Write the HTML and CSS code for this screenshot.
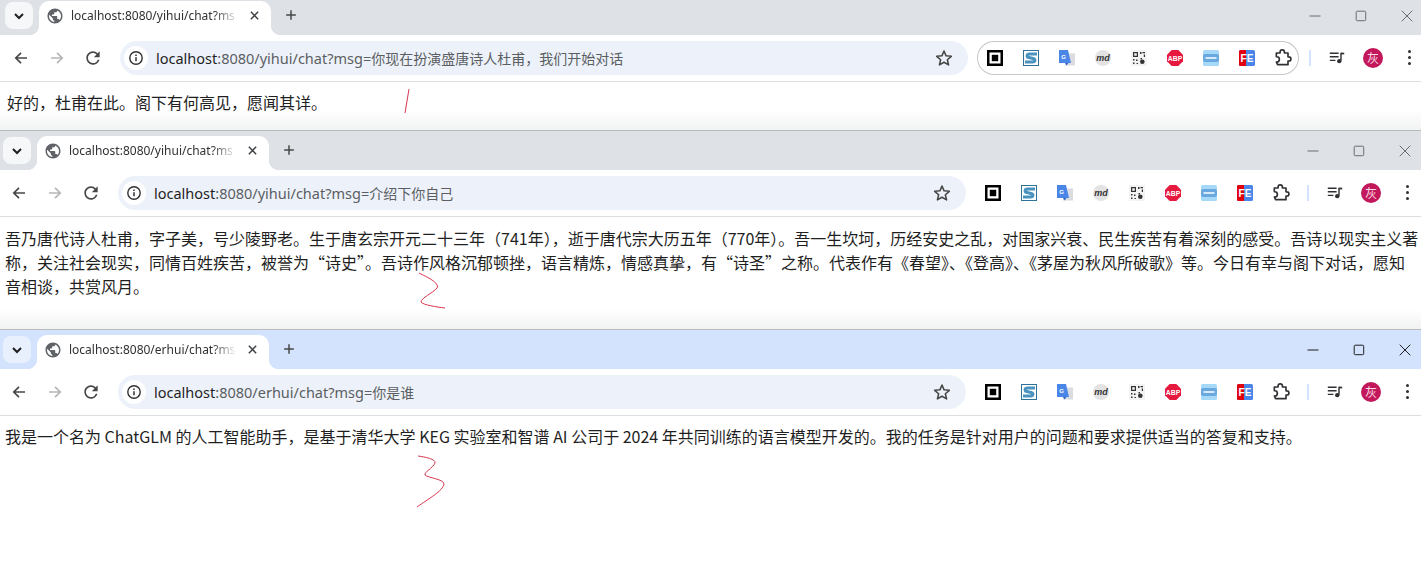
FILE: index.html
```html
<!DOCTYPE html>
<html lang="zh-CN">
<head>
  <meta charset="UTF-8">
  <title>ChatGLM 角色扮演对话</title>
  <link rel="stylesheet" href="styles.css">
</head>
<body>

  <!-- shared icons -->
  <svg class="icon-defs" width="0" height="0">
    <symbol id="i-globe" viewBox="0 0 24 24"><path fill="#5f6368" d="M12 2C6.48 2 2 6.48 2 12s4.48 10 10 10 10-4.48 10-10S17.52 2 12 2zm-1 17.93c-3.95-.49-7-3.85-7-7.93 0-.62.08-1.21.21-1.79L9 15v1c0 1.1.9 2 2 2v1.93zm6.9-2.54c-.26-.81-1-1.39-1.9-1.39h-1v-3c0-.55-.45-1-1-1H8v-2h2c.55 0 1-.45 1-1V7h2c1.1 0 2-.9 2-2v-.41c2.93 1.19 5 4.06 5 7.41 0 2.08-.8 3.97-2.1 5.39z"/></symbol>
    <symbol id="i-chevron" viewBox="0 0 16 16"><path d="M4 6l4 4 4-4" fill="none" stroke="#1f1f1f" stroke-width="2"/></symbol>
    <symbol id="i-close" viewBox="0 0 16 16"><path d="M3.5 3.5l9 9M12.5 3.5l-9 9" fill="none" stroke="#3c4043" stroke-width="1.8"/></symbol>
    <symbol id="i-plus" viewBox="0 0 16 16"><path d="M8 2.5v11M2.5 8h11" fill="none" stroke="#474747" stroke-width="1.7"/></symbol>
    <symbol id="i-back" viewBox="0 0 16 16"><path d="M14 8H3M8 2.8L2.8 8 8 13.2" fill="none" stroke="#474747" stroke-width="1.7"/></symbol>
    <symbol id="i-forward" viewBox="0 0 16 16"><path d="M2 8h11M8 2.8L13.2 8 8 13.2" fill="none" stroke="#b4b6b8" stroke-width="1.7"/></symbol>
    <symbol id="i-reload" viewBox="0 0 24 24"><path fill="#474747" d="M17.65 6.35A7.958 7.958 0 0 0 12 4c-4.42 0-7.99 3.58-7.99 8s3.57 8 7.99 8c3.73 0 6.84-2.55 7.73-6h-2.08A5.99 5.99 0 0 1 12 18c-3.31 0-6-2.69-6-6s2.69-6 6-6c1.66 0 3.14.69 4.22 1.78L13 11h7V4l-2.35 2.35z"/></symbol>
    <symbol id="i-info" viewBox="0 0 16 16"><circle cx="8" cy="8" r="6.2" fill="none" stroke="#303134" stroke-width="1.4"/><path d="M8 7.2v4M8 4.6v1.5" stroke="#303134" stroke-width="1.5"/></symbol>
    <symbol id="i-star" viewBox="0 0 24 24"><path d="M12 3.6l2.5 5.8 6.3.6-4.8 4.1 1.5 6.2L12 17.1l-5.5 3.2L8 14.1 3.2 10l6.3-.6z" fill="none" stroke="#474747" stroke-width="1.9" stroke-linejoin="round"/></symbol>
    <symbol id="i-ext-square" viewBox="0 0 16 16"><rect width="16" height="16" fill="#000"/><rect x="2.5" y="2.5" width="11" height="11" fill="#fff"/><rect x="4.8" y="4.8" width="6.4" height="6.4" fill="#000"/></symbol>
    <symbol id="i-ext-s" viewBox="0 0 16 16"><rect x=".5" y=".5" width="15" height="15" fill="#fff" stroke="#2f7197"/><path d="M14 4H6.500C3.500 4 3.500 7 6 7.500l4 1c2.500.6 2.500 3.500-.5 3.500H2" fill="none" stroke="#4a93bf" stroke-width="3.200"/></symbol>
    <symbol id="i-ext-qr" viewBox="0 0 16 16"><rect width="16" height="16" fill="#f3f3f3"/><path d="M2 2h5v5H2zM3.200 3.200v2.600h2.600V3.200zM9 2h1.500v2H9zM11.500 2h2.500v1.200h-2.500zM12.800 4.500H14V7h-1.200zM2 9h1.500v1.500H2zM5 9.500h1.500V11H5zM2 12.500h1.500V14H2zM5.500 13H7v1H5.500z" fill="#333" fill-rule="evenodd"/><circle cx="11.300" cy="11.800" r="2.300" fill="#333"/><rect x="9.500" y="8" width="1.500" height="1.500" fill="#333"/></symbol>
    <symbol id="i-ext-card" viewBox="0 0 16 16"><rect width="16" height="16" rx="1.500" fill="#a6d8f7"/><rect x="0" y="4" width="16" height="8" rx="2" fill="#6aa8e0"/><rect x="2.500" y="7" width="11" height="2" fill="#d5e9fb"/></symbol>
    <symbol id="i-puzzle" viewBox="0 0 24 24"><path d="M4 6h4.500V4.800a2.600 2.600 0 0 1 5.200 0V6H18v4.600h1a2.500 2.500 0 0 1 0 5h-1V20H5.500L4 16.800h.5a3 3 0 0 0 0-6.300H4z" fill="none" stroke="#303134" stroke-width="2" stroke-linejoin="round"/></symbol>
    <symbol id="i-media" viewBox="0 0 20 20"><path d="M1 4h11M1 8.500h11M1 13h7" stroke="#303134" stroke-width="1.800" fill="none"/><path d="M15 3.500v10" stroke="#303134" stroke-width="1.800"/><path d="M15 3.300h4v2.200h-4z" fill="#303134"/><circle cx="12.800" cy="14" r="2.700" fill="#303134"/></symbol>
    <symbol id="i-min" viewBox="0 0 12 12"><path d="M.5 6h11" stroke="currentColor" stroke-width="1"/></symbol>
    <symbol id="i-max" viewBox="0 0 12 12"><rect x="1.200" y="1.200" width="9.500" height="9.500" rx="1" fill="none" stroke="currentColor" stroke-width="1"/></symbol>
    <symbol id="i-x" viewBox="0 0 12 12"><path d="M.7.700l10.600 10.600M11.300.700L.7 11.300" stroke="currentColor" stroke-width="1" fill="none"/></symbol>
  </svg>

  <!-- window 1 -->
  <section class="window window-one">
    <div class="tabstrip">
      <button class="tab-search"><svg class="ico-16"><use href="#i-chevron"/></svg></button>
      <div class="tab">
        <svg class="ico-18"><use href="#i-globe"/></svg>
        <span class="tab-title">localhost:8080/yihui/chat?ms</span>
        <svg class="ico-tabx"><use href="#i-close"/></svg>
      </div>
      <svg class="ico-plus"><use href="#i-plus"/></svg>
      <div class="win-controls">
        <span class="win-btn"><svg class="ico-12"><use href="#i-min"/></svg></span>
        <span class="win-btn"><svg class="ico-12"><use href="#i-max"/></svg></span>
        <span class="win-btn"><svg class="ico-12"><use href="#i-x"/></svg></span>
      </div>
    </div>
    <div class="toolbar">
      <span class="tool"><svg class="ico-16"><use href="#i-back"/></svg></span>
      <span class="tool"><svg class="ico-16"><use href="#i-forward"/></svg></span>
      <span class="tool"><svg class="ico-20"><use href="#i-reload"/></svg></span>
      <div class="omnibox">
        <span class="info-chip"><svg class="ico-16"><use href="#i-info"/></svg></span>
        <span class="url"><span class="url-host">localhost</span><span class="url-path">:8080/yihui/chat?msg=</span>你现在扮演盛唐诗人杜甫，我们开始对话</span>
        <svg class="ico-star"><use href="#i-star"/></svg>
      </div>
      <div class="ext-group">
        <span class="ext"><svg class="ico-16"><use href="#i-ext-square"/></svg></span>
        <span class="ext"><svg class="ico-16"><use href="#i-ext-s"/></svg></span>
        <span class="ext">
          <svg class="ico-16" viewBox="0 0 16 16"><rect x="6" y="3.500" width="10" height="12" fill="#dadce0"/><path d="M0 0h9l3 13H0z" fill="#4a86e8"/><path d="M6 13l1.500 2.500L9.500 13z" fill="#3367c6"/><text x="4.700" y="8.800" class="ext-letter" font-size="6" text-anchor="middle">G</text></svg>
        </span>
        <span class="ext">
          <svg class="ico-16" viewBox="0 0 16 16"><circle cx="8" cy="8" r="8" fill="#e3e3e3"/><text x="8" y="11" class="ext-md" font-size="9" text-anchor="middle">md</text></svg>
        </span>
        <span class="ext"><svg class="ico-16"><use href="#i-ext-qr"/></svg></span>
        <span class="ext">
          <svg class="ico-16" viewBox="0 0 16 16"><path d="M4.700 0h6.600L16 4.700v6.600L11.300 16H4.700L0 11.300V4.700z" fill="#e6193f"/><text x="8" y="10.600" class="ext-letter" font-size="6.800" text-anchor="middle">ABP</text></svg>
        </span>
        <span class="ext"><svg class="ico-16"><use href="#i-ext-card"/></svg></span>
        <span class="ext">
          <svg class="ico-16" viewBox="0 0 16 16"><rect width="16" height="16" rx="1.500" fill="#4a86e8"/><path d="M1.500 0H7v16H1.500A1.500 1.500 0 0 1 0 14.500v-13A1.500 1.500 0 0 1 1.500 0z" fill="#e2000f"/><text x="8" y="11.800" class="ext-letter" font-size="10" text-anchor="middle">FE</text></svg>
        </span>
        <span class="ext"><svg class="ico-20"><use href="#i-puzzle"/></svg></span>
      </div>
      <span class="tool-sep"></span>
      <span class="tool"><svg class="ico-16"><use href="#i-media"/></svg></span>
      <span class="tool"><span class="avatar">灰</span></span>
      <span class="tool"><span class="dots"></span></span>
    </div>
    <div class="page page-fade">
      <p>好的，杜甫在此。阁下有何高见，愿闻其详。</p>
    </div>
  </section>

  <!-- window 2 -->
  <section class="window window-two">
    <div class="tabstrip">
      <button class="tab-search"><svg class="ico-16"><use href="#i-chevron"/></svg></button>
      <div class="tab">
        <svg class="ico-18"><use href="#i-globe"/></svg>
        <span class="tab-title">localhost:8080/yihui/chat?ms</span>
        <svg class="ico-tabx"><use href="#i-close"/></svg>
      </div>
      <svg class="ico-plus"><use href="#i-plus"/></svg>
      <div class="win-controls">
        <span class="win-btn"><svg class="ico-12"><use href="#i-min"/></svg></span>
        <span class="win-btn"><svg class="ico-12"><use href="#i-max"/></svg></span>
        <span class="win-btn"><svg class="ico-12"><use href="#i-x"/></svg></span>
      </div>
    </div>
    <div class="toolbar">
      <span class="tool"><svg class="ico-16"><use href="#i-back"/></svg></span>
      <span class="tool"><svg class="ico-16"><use href="#i-forward"/></svg></span>
      <span class="tool"><svg class="ico-20"><use href="#i-reload"/></svg></span>
      <div class="omnibox">
        <span class="info-chip"><svg class="ico-16"><use href="#i-info"/></svg></span>
        <span class="url"><span class="url-host">localhost</span><span class="url-path">:8080/yihui/chat?msg=</span>介绍下你自己</span>
        <svg class="ico-star"><use href="#i-star"/></svg>
      </div>
      <div class="ext-group">
        <span class="ext"><svg class="ico-16"><use href="#i-ext-square"/></svg></span>
        <span class="ext"><svg class="ico-16"><use href="#i-ext-s"/></svg></span>
        <span class="ext">
          <svg class="ico-16" viewBox="0 0 16 16"><rect x="6" y="3.500" width="10" height="12" fill="#dadce0"/><path d="M0 0h9l3 13H0z" fill="#4a86e8"/><path d="M6 13l1.500 2.500L9.500 13z" fill="#3367c6"/><text x="4.700" y="8.800" class="ext-letter" font-size="6" text-anchor="middle">G</text></svg>
        </span>
        <span class="ext">
          <svg class="ico-16" viewBox="0 0 16 16"><circle cx="8" cy="8" r="8" fill="#e3e3e3"/><text x="8" y="11" class="ext-md" font-size="9" text-anchor="middle">md</text></svg>
        </span>
        <span class="ext"><svg class="ico-16"><use href="#i-ext-qr"/></svg></span>
        <span class="ext">
          <svg class="ico-16" viewBox="0 0 16 16"><path d="M4.700 0h6.600L16 4.700v6.600L11.300 16H4.700L0 11.300V4.700z" fill="#e6193f"/><text x="8" y="10.600" class="ext-letter" font-size="6.800" text-anchor="middle">ABP</text></svg>
        </span>
        <span class="ext"><svg class="ico-16"><use href="#i-ext-card"/></svg></span>
        <span class="ext">
          <svg class="ico-16" viewBox="0 0 16 16"><rect width="16" height="16" rx="1.500" fill="#4a86e8"/><path d="M1.500 0H7v16H1.500A1.500 1.500 0 0 1 0 14.500v-13A1.500 1.500 0 0 1 1.500 0z" fill="#e2000f"/><text x="8" y="11.800" class="ext-letter" font-size="10" text-anchor="middle">FE</text></svg>
        </span>
        <span class="ext"><svg class="ico-20"><use href="#i-puzzle"/></svg></span>
      </div>
      <span class="tool-sep"></span>
      <span class="tool"><svg class="ico-16"><use href="#i-media"/></svg></span>
      <span class="tool"><span class="avatar">灰</span></span>
      <span class="tool"><span class="dots"></span></span>
    </div>
    <div class="page page-fade">
      <p>吾乃唐代诗人杜甫，字子美，号少陵野老。生于唐玄宗开元二十三年（741年），逝于唐代宗大历五年（770年）。吾一生坎坷，历经安史之乱，对国家兴衰、民生疾苦有着深刻的感受。吾诗以现实主义著称，关注社会现实，同情百姓疾苦，被誉为“诗史”。吾诗作风格沉郁顿挫，语言精炼，情感真挚，有“诗圣”之称。代表作有《春望》、《登高》、《茅屋为秋风所破歌》等。今日有幸与阁下对话，愿知音相谈，共赏风月。</p>
    </div>
  </section>

  <!-- window 3 (focused) -->
  <section class="window window-three">
    <div class="tabstrip">
      <button class="tab-search"><svg class="ico-16"><use href="#i-chevron"/></svg></button>
      <div class="tab">
        <svg class="ico-18"><use href="#i-globe"/></svg>
        <span class="tab-title">localhost:8080/erhui/chat?ms</span>
        <svg class="ico-tabx"><use href="#i-close"/></svg>
      </div>
      <svg class="ico-plus"><use href="#i-plus"/></svg>
      <div class="win-controls">
        <span class="win-btn"><svg class="ico-12"><use href="#i-min"/></svg></span>
        <span class="win-btn"><svg class="ico-12"><use href="#i-max"/></svg></span>
        <span class="win-btn"><svg class="ico-12"><use href="#i-x"/></svg></span>
      </div>
    </div>
    <div class="toolbar">
      <span class="tool"><svg class="ico-16"><use href="#i-back"/></svg></span>
      <span class="tool"><svg class="ico-16"><use href="#i-forward"/></svg></span>
      <span class="tool"><svg class="ico-20"><use href="#i-reload"/></svg></span>
      <div class="omnibox">
        <span class="info-chip"><svg class="ico-16"><use href="#i-info"/></svg></span>
        <span class="url"><span class="url-host">localhost</span><span class="url-path">:8080/erhui/chat?msg=</span>你是谁</span>
        <svg class="ico-star"><use href="#i-star"/></svg>
      </div>
      <div class="ext-group">
        <span class="ext"><svg class="ico-16"><use href="#i-ext-square"/></svg></span>
        <span class="ext"><svg class="ico-16"><use href="#i-ext-s"/></svg></span>
        <span class="ext">
          <svg class="ico-16" viewBox="0 0 16 16"><rect x="6" y="3.500" width="10" height="12" fill="#dadce0"/><path d="M0 0h9l3 13H0z" fill="#4a86e8"/><path d="M6 13l1.500 2.500L9.500 13z" fill="#3367c6"/><text x="4.700" y="8.800" class="ext-letter" font-size="6" text-anchor="middle">G</text></svg>
        </span>
        <span class="ext">
          <svg class="ico-16" viewBox="0 0 16 16"><circle cx="8" cy="8" r="8" fill="#e3e3e3"/><text x="8" y="11" class="ext-md" font-size="9" text-anchor="middle">md</text></svg>
        </span>
        <span class="ext"><svg class="ico-16"><use href="#i-ext-qr"/></svg></span>
        <span class="ext">
          <svg class="ico-16" viewBox="0 0 16 16"><path d="M4.700 0h6.600L16 4.700v6.600L11.300 16H4.700L0 11.300V4.700z" fill="#e6193f"/><text x="8" y="10.600" class="ext-letter" font-size="6.800" text-anchor="middle">ABP</text></svg>
        </span>
        <span class="ext"><svg class="ico-16"><use href="#i-ext-card"/></svg></span>
        <span class="ext">
          <svg class="ico-16" viewBox="0 0 16 16"><rect width="16" height="16" rx="1.500" fill="#4a86e8"/><path d="M1.500 0H7v16H1.500A1.500 1.500 0 0 1 0 14.500v-13A1.500 1.500 0 0 1 1.500 0z" fill="#e2000f"/><text x="8" y="11.800" class="ext-letter" font-size="10" text-anchor="middle">FE</text></svg>
        </span>
        <span class="ext"><svg class="ico-20"><use href="#i-puzzle"/></svg></span>
      </div>
      <span class="tool-sep"></span>
      <span class="tool"><svg class="ico-16"><use href="#i-media"/></svg></span>
      <span class="tool"><span class="avatar">灰</span></span>
      <span class="tool"><span class="dots"></span></span>
    </div>
    <div class="page">
      <p>我是一个名为 ChatGLM 的人工智能助手，是基于清华大学 KEG 实验室和智谱 AI 公司于 2024 年共同训练的语言模型开发的。我的任务是针对用户的问题和要求提供适当的答复和支持。</p>
    </div>
  </section>

  <!-- red hand-drawn numbers over the screenshot -->
  <svg class="scribbles" viewBox="0 0 1421 583">
    <path d="M409 89C408 97 406 105 405 113"/>
    <path d="M419 273C427 277 440 283 437 288C433 293 421 298 421 302C423 305 437 307 445 308"/>
    <path d="M418 456C425 457 436 459 435 463C433 468 424 472 425 475C428 478 444 479 444 484C443 491 428 499 417 507"/>
  </svg>

</body>
</html>
```

FILE: styles.css
```css
* { box-sizing: border-box; }

html, body {
  margin: 0;
  padding: 0;
  height: 583px;
  overflow: hidden;
  background: #fff;
}

body {
  position: relative;
  font-family: "Noto Sans CJK SC", "Noto Sans", sans-serif;
  color: #1f1f1f;
}

.icon-defs { position: absolute; }

.ext-letter { fill: #fff; font-family: "Liberation Sans", sans-serif; font-weight: 700; }
.ext-md { fill: #333; font-family: "Liberation Sans", sans-serif; font-style: italic; font-weight: 700; }

/* ---------- window frame ---------- */
.window {
  --shift: 0px;
  --strip-bg: #dee1e6;
  --search-bg: #f6f7f8;
  --ctrl: #6a6d70;
  width: 1428px;
  display: flex;
  flex-direction: column;
}
.window-one { --shift: 2px; height: 130px; }
.window-two { height: 199px; border-top: 1px solid #b9bbbd; }
.window-three {
  height: 254px;
  border-top: 1px solid #b9bbbd;
  --strip-bg: #d3e3fd;
  --search-bg: #e8f0fe;
  --ctrl: #1f1f1f;
}

/* ---------- tab strip ---------- */
.tabstrip {
  height: 39px;
  padding: 5px 0 0 calc(3px + var(--shift));
  background: var(--strip-bg);
  display: flex;
  align-items: flex-start;
  flex-shrink: 0;
}
.window-one .tabstrip { height: 35px; padding-top: 1px; }

.tab-search {
  width: 28px;
  height: 27px;
  margin: 1px 6px 0 0;
  padding: 0;
  border: 0;
  border-radius: 8px;
  background: var(--search-bg);
  display: flex;
  align-items: center;
  justify-content: center;
}

.tab {
  position: relative;
  width: 232px;
  height: 34px;
  padding: 0 0 5px 7px;
  background: #fff;
  border-radius: 10px 10px 0 0;
  display: flex;
  align-items: center;
}
.tab::before,
.tab::after {
  content: "";
  position: absolute;
  bottom: 0;
  width: 10px;
  height: 10px;
}
.tab::before { left: -10px; background: radial-gradient(circle at 0 0, transparent 10px, #fff 10.5px); }
.tab::after { right: -10px; background: radial-gradient(circle at 100% 0, transparent 10px, #fff 10.5px); }

.tab-title {
  width: 168px;
  margin: 0 9px 0 7px;
  font-family: "Noto Sans", "Noto Sans CJK SC", sans-serif;
  font-size: 12px;
  line-height: 18px;
  color: #303134;
  white-space: nowrap;
  overflow: hidden;
  -webkit-mask-image: linear-gradient(90deg, #000 85%, transparent 100%);
  mask-image: linear-gradient(90deg, #000 85%, transparent 100%);
}

.ico-12 { width: 12px; height: 12px; display: block; color: var(--ctrl); }
.ico-16 { width: 16px; height: 16px; display: block; }
.ico-18 { width: 18px; height: 18px; display: block; flex-shrink: 0; }
.ico-20 { width: 20px; height: 20px; display: block; }
.ico-tabx { width: 13px; height: 13px; flex-shrink: 0; }
.ico-plus { width: 14px; height: 14px; margin: 7px 0 0 13px; }
.ico-star { width: 20px; height: 20px; margin-right: 14px; flex-shrink: 0; }

.win-controls {
  margin-left: auto;
  margin-right: calc(0px - var(--shift));
  display: flex;
}
.win-btn {
  width: 46px;
  height: 29px;
  display: flex;
  align-items: center;
  justify-content: center;
}

/* ---------- toolbar ---------- */
.toolbar {
  height: 47px;
  padding: 0 0 1px calc(1px + var(--shift));
  background: #fff;
  border-bottom: 1px solid #dcdee0;
  display: flex;
  align-items: center;
  flex-shrink: 0;
}
.tool {
  width: 36px;
  height: 36px;
  flex-shrink: 0;
  display: flex;
  align-items: center;
  justify-content: center;
}

.omnibox {
  width: 848px;
  height: 34px;
  margin-left: 9px;
  padding: 0 0 0 4px;
  background: #edf2fa;
  border-radius: 17px;
  display: flex;
  align-items: center;
  flex-shrink: 0;
}
.info-chip {
  width: 24px;
  height: 24px;
  border-radius: 50%;
  background: #fff;
  display: flex;
  align-items: center;
  justify-content: center;
  flex-shrink: 0;
}
.url {
  flex: 1;
  margin-left: 8px;
  font-family: "Noto Sans", "Noto Sans CJK SC", sans-serif;
  font-size: 14px;
  color: #5b5e62;
  white-space: nowrap;
  overflow: hidden;
}
.url-host { color: #1f1f1f; font-size: 14.5px; }
.url-path { font-size: 14.5px; }

.ext-group {
  width: 322px;
  height: 34px;
  margin-left: 9px;
  border-radius: 17px;
  display: flex;
  align-items: center;
  flex-shrink: 0;
}
.window-one .ext-group { box-shadow: inset 0 0 0 1px #c4c7c5; }
.ext {
  width: 36px;
  height: 34px;
  flex-shrink: 0;
  display: flex;
  align-items: center;
  justify-content: center;
}

.tool-sep {
  width: 2px;
  height: 16px;
  margin: 0 8px 0 10px;
  background: #d3e3fd;
  flex-shrink: 0;
}

.avatar {
  width: 20px;
  height: 20px;
  border-radius: 50%;
  background: #c2185b;
  color: #fbd9e5;
  font-size: 12px;
  line-height: 20px;
  text-align: center;
}

.dots,
.dots::before,
.dots::after {
  display: block;
  width: 3px;
  height: 3px;
  border-radius: 50%;
  background: #303134;
}
.dots { position: relative; }
.dots::before, .dots::after { content: ""; position: absolute; left: 0; }
.dots::before { top: -6px; }
.dots::after { top: 6px; }

/* ---------- page body ---------- */
.page {
  flex: 1;
  padding: 8px 1px 0 calc(5px + var(--shift));
  width: 1421px;
  background: #fff;
}
.window-two .page { padding-top: 9px; }
.page-fade { background: linear-gradient(#fff calc(100% - 20px), #f1f2f2 100%); }
.page p {
  margin: 0;
  font-size: 16px;
  line-height: 24px;
}

/* ---------- annotations ---------- */
.scribbles {
  position: absolute;
  top: 0;
  left: 0;
  width: 1421px;
  height: 583px;
  pointer-events: none;
}
.scribbles path {
  fill: none;
  stroke: #d8354f;
  stroke-width: 1;
}
```
